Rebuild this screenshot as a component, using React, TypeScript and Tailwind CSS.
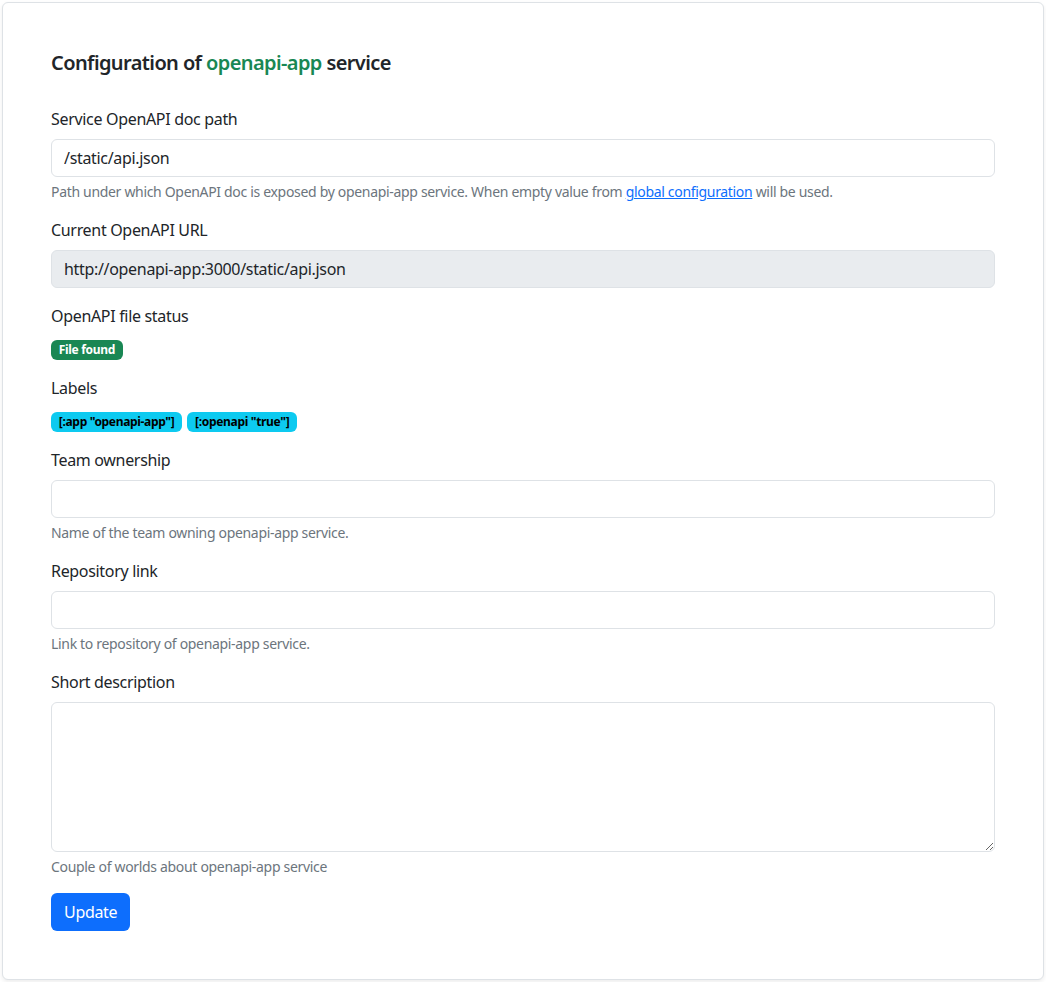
const font = { fontFamily: '"Noto Sans", "Open Sans", sans-serif' }

const Label = ({ children }: { children: React.ReactNode }) => (
  <label className="mb-2 block text-base leading-6 text-[#212529]">{children}</label>
)

const Help = ({ children }: { children: React.ReactNode }) => (
  <div className="mt-1 text-sm leading-[21px] text-[#6c757d]">{children}</div>
)

const inputBase =
  'block h-[38px] w-full rounded-md border border-[#dee2e6] px-3 text-base leading-6 text-[#212529] outline-none'

const Badge = ({ children, className }: { children: React.ReactNode; className: string }) => (
  <span
    className={`inline-block rounded-md px-[7.8px] py-[4.2px] align-baseline text-xs leading-none font-bold ${className}`}
  >
    {children}
  </span>
)

export default function App() {
  const service = 'openapi-app'
  return (
    <div className="min-h-screen bg-white p-[2px] tracking-[-0.02em]" style={font}>
      <div className="rounded-md border border-[#dee2e6] bg-white p-12 shadow-[0_2px_4px_rgba(0,0,0,0.075)]">
        <h5 className="mb-8 text-xl leading-6 font-semibold tracking-[-0.03em] text-[#212529]">
          Configuration of <span className="text-[#198754]">{service}</span> service
        </h5>

        <div className="mb-4">
          <Label>Service OpenAPI doc path</Label>
          <input className={`${inputBase} bg-white`} defaultValue="/static/api.json" />
          <Help>
            Path under which OpenAPI doc is exposed by {service} service. When empty value from{' '}
            <a href="#" className="text-[#0d6efd] underline">
              global configuration
            </a>{' '}
            will be used.
          </Help>
        </div>

        <div className="mb-4">
          <Label>Current OpenAPI URL</Label>
          <input
            className={`${inputBase} bg-[#e9ecef]`}
            disabled
            defaultValue="http://openapi-app:3000/static/api.json"
          />
        </div>

        <div className="mb-4">
          <Label>OpenAPI file status</Label>
          <div className="leading-6">
            <Badge className="bg-[#198754] text-white">File found</Badge>
          </div>
        </div>

        <div className="mb-4">
          <Label>Labels</Label>
          <div className="leading-6">
            <Badge className="mr-[5px] bg-[#0dcaf0] text-black">[:app "openapi-app"]</Badge>
            <Badge className="bg-[#0dcaf0] text-black">[:openapi "true"]</Badge>
          </div>
        </div>

        <div className="mb-4">
          <Label>Team ownership</Label>
          <input className={`${inputBase} bg-white`} />
          <Help>Name of the team owning {service} service.</Help>
        </div>

        <div className="mb-4">
          <Label>Repository link</Label>
          <input className={`${inputBase} bg-white`} />
          <Help>Link to repository of {service} service.</Help>
        </div>

        <div className="mb-4">
          <Label>Short description</Label>
          <textarea className="block h-[150px] w-full rounded-md border border-[#dee2e6] bg-white px-3 py-1.5 text-base text-[#212529] outline-none" />
          <Help>Couple of worlds about {service} service</Help>
        </div>

        <button className="h-[38px] rounded-md bg-[#0d6efd] px-[13px] text-base leading-6 text-white">
          Update
        </button>
      </div>
    </div>
  )
}
